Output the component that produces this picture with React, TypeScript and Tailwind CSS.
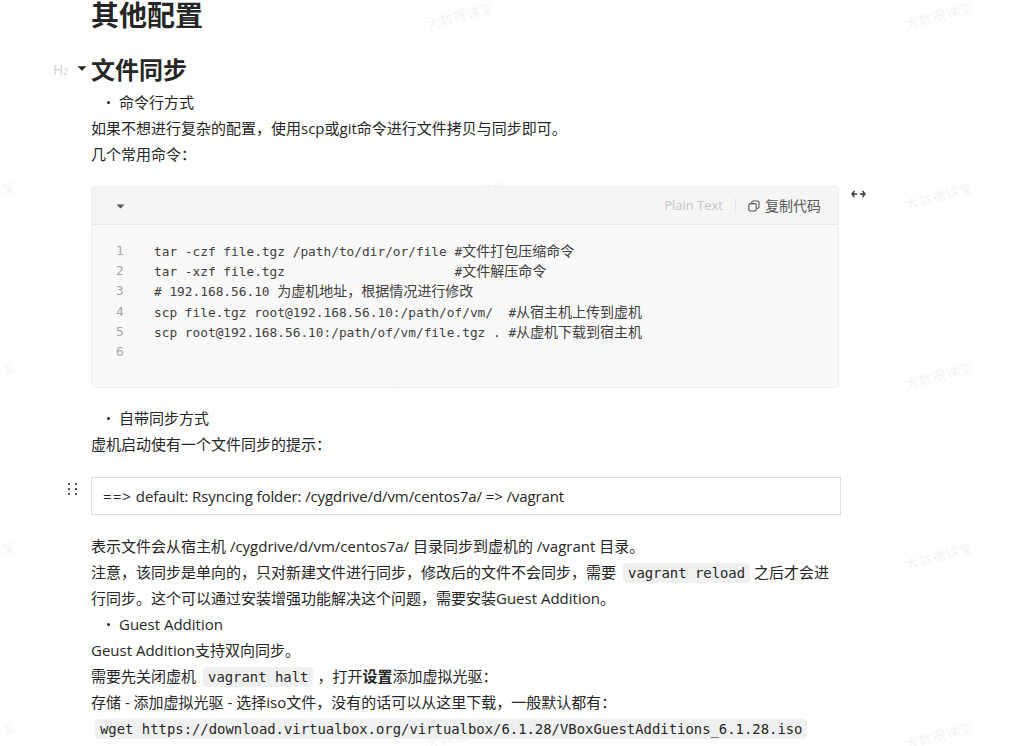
const sans = "font-['Open_Sans','Noto_Sans_CJK_SC',sans-serif]";

const codeLines = [
  ["tar -czf file.tgz /path/to/dir/or/file #", "文件打包压缩命令"],
  ["tar -xzf file.tgz                      #", "文件解压命令"],
  ["# 192.168.56.10 ", "为虚机地址，根据情况进行修改"],
  ["scp file.tgz root@192.168.56.10:/path/of/vm/  #", "从宿主机上传到虚机"],
  ["scp root@192.168.56.10:/path/of/vm/file.tgz . #", "从虚机下载到宿主机"],
  ["", ""],
];

const marks = [
  [425, 6], [904, 6],
  [-53, 186], [437, 186], [904, 186],
  [-53, 366], [393, 366], [904, 366],
  [-53, 546], [425, 546], [904, 546],
  [-53, 726], [425, 726], [904, 726],
];

const Watermark = ({ x, y }: { x: number; y: number }) => (
  <span
    className="absolute -rotate-[15deg] text-[14px] leading-[20px] text-[#00000012] whitespace-nowrap select-none"
    style={{ left: x, top: y }}
  >
    大数据课堂
  </span>
);

const Code = ({ children, first }: { children: string; first?: boolean }) => (
  <code
    className={`${first ? "ml-[4px]" : "ml-[7px]"} mr-[4px] rounded-[4px] bg-[#eff0f0] px-[5px] py-[2px] font-['DejaVu_Sans_Mono','Noto_Sans_CJK_SC',monospace] text-[13.9px] text-[#262626]`}
  >
    {children}
  </code>
);

const Bullet = ({ children }: { children: string }) => (
  <div className="flex h-[26px] items-center pb-[2px] pl-[16px]">
    <span className="mr-[9px] h-[3px] w-[3px] rounded-full bg-[#262626]" />
    <span>{children}</span>
  </div>
);

const P = ({ children }: { children: React.ReactNode }) => (
  <p className="h-[26px] whitespace-nowrap leading-[24px]">{children}</p>
);

export default function App() {
  return (
    <div className={`relative h-[746px] w-full overflow-hidden bg-white text-[15px] text-[#262626] ${sans}`}>
      {marks.map(([x, y]) => (
        <Watermark key={`${x}-${y}`} x={x} y={y} />
      ))}

      <span className="absolute left-[53px] top-[62px] text-[14px] leading-[16px] text-[#d3d0d3]">
        H<span className="text-[9px]">2</span>
      </span>
      <svg className="absolute left-[77px] top-[66px]" width="10" height="5" viewBox="0 0 10 5">
        <path d="M0.5 0.2h9L5 4.8z" fill="#262626" />
      </svg>
      <svg className="absolute left-[851px] top-[190px]" width="15" height="8" viewBox="0 0 15 8" fill="none" stroke="#333" strokeWidth="1.3">
        <path d="M3.5 1L1 4l2.5 3M1 4h5M11.5 1L14 4l-2.5 3M14 4H9" />
      </svg>
      <svg className="absolute left-[67px] top-[482px]" width="12" height="14" viewBox="0 0 12 14" fill="#555">
        <rect x="1" y="1" width="2" height="2" />
        <rect x="8" y="1" width="2" height="2" />
        <rect x="1" y="6" width="2" height="2" />
        <rect x="8" y="6" width="2" height="2" />
        <rect x="1" y="11" width="2" height="2" />
        <rect x="8" y="11" width="2" height="2" />
      </svg>

      <main className="relative flex w-[750px] flex-col ml-[91px]">
        <h1 className="-mt-[3px] text-[28px] font-bold leading-[36px]">其他配置</h1>
        <h2 className="mt-[19px] text-[24px] font-bold leading-[36px]">文件同步</h2>

        <div className="mt-[2px]">
          <Bullet>命令行方式</Bullet>
          <P>如果不想进行复杂的配置，使用scp或git命令进行文件拷贝与同步即可。</P>
          <P>几个常用命令：</P>
        </div>

        <section className="mt-[18px] h-[202px] w-[748px] overflow-hidden rounded-[4px] border border-[#eeeeee] bg-[#f9f9f9]">
          <header className="flex h-[38px] items-center border-b border-[#e8e8e8] bg-[#f5f5f5] pl-[24px] pr-[17px]">
            <svg className="mt-[1px]" width="9" height="5" viewBox="0 0 9 5">
              <path d="M0.5 0.5h8L4.5 4.5z" fill="#555" />
            </svg>
            <span className="ml-auto text-[13px] text-[#c4c4c4]">Plain Text</span>
            <span className="mx-[12px] h-[16px] w-px bg-[#e5e5e5]" />
            <svg width="12" height="12" viewBox="0 0 12 12" fill="none" stroke="#555" strokeWidth="1.1">
              <path d="M3.8 3.6V2.2a1.2 1.2 0 0 1 1.2-1.2h4.8A1.2 1.2 0 0 1 11 2.2V7a1.2 1.2 0 0 1-1.2 1.2H8.2" />
              <rect x="0.8" y="3.6" width="7.4" height="7.4" rx="1.5" />
            </svg>
            <span className="ml-[5px] text-[14px] text-[#595959]">复制代码</span>
          </header>
          <div className="flex pt-[15.5px] font-['DejaVu_Sans_Mono','Noto_Sans_CJK_SC',monospace] text-[12.8px] leading-[20.4px]">
            <div className="w-[62px] pl-[24px] text-[#a6a6a6]">
              {codeLines.map((_, i) => (
                <div key={i} className="h-[20.4px]">{i + 1}</div>
              ))}
            </div>
            <div className="text-[#404040]">
              {codeLines.map(([latin, cjk], i) => (
                <pre key={i} className="h-[20.4px] font-['DejaVu_Sans_Mono','Noto_Sans_CJK_SC',monospace]">
                  {latin}
                  <span className="text-[14px]">{cjk}</span>
                </pre>
              ))}
            </div>
          </div>
        </section>

        <div className="mt-[18px]">
          <Bullet>自带同步方式</Bullet>
          <P>虚机启动使有一个文件同步的提示：</P>
        </div>

        <div className="mt-[19px] flex h-[38px] w-[750px] items-center whitespace-pre border border-[#dddddd] bg-white pl-[11px] tracking-[-0.1px]">
          <span className="tracking-[1.1px]">==&gt;</span>
          <span> default: Rsyncing folder: /cygdrive/d/vm/centos7a/ =&gt; /vagrant</span>
        </div>

        <div className="mt-[19px]">
          <P>表示文件会从宿主机 /cygdrive/d/vm/centos7a/ 目录同步到虚机的 /vagrant 目录。</P>
          <P>
            注意，该同步是单向的，只对新建文件进行同步，修改后的文件不会同步，需要<Code>vagrant reload</Code>之后才会进
          </P>
          <P>行同步。这个可以通过安装增强功能解决这个问题，需要安装Guest Addition。</P>
          <Bullet>Guest Addition</Bullet>
          <P>Geust Addition支持双向同步。</P>
          <P>
            需要先关闭虚机<Code>vagrant halt</Code>，打开<strong>设置</strong>添加虚拟光驱：
          </P>
          <P>存储 - 添加虚拟光驱 - 选择iso文件，没有的话可以从这里下载，一般默认都有：</P>
          <P>
            <Code first>wget https://download.virtualbox.org/virtualbox/6.1.28/VBoxGuestAdditions_6.1.28.iso</Code>
          </P>
        </div>
      </main>
    </div>
  );
}
